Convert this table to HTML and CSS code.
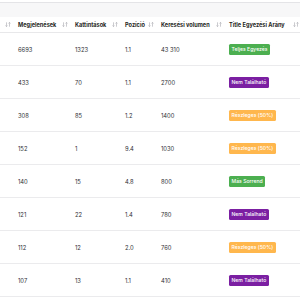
FILE: index.html
```html
<!DOCTYPE html>
<html lang="hu">
<head>
<meta charset="utf-8">
<link rel="stylesheet" href="styles.css">
</head>
<body>
<div class="wrap">
  <div class="toolbar"></div>
  <table class="grid">
    <colgroup>
      <col class="c0"><col class="c1"><col class="c2"><col class="c3"><col class="c4"><col class="c5">
    </colgroup>
    <thead>
      <tr>
        <th><div class="th"><span></span><svg class="sort" viewBox="0 0 6 5"><path d="M1.5 0.3V4.6M0.4 3.5L1.5 4.6L2.6 3.5M4.5 4.7V0.4M3.4 1.5L4.5 0.4L5.6 1.5"/></svg></div></th>
        <th><div class="th"><span>Megjelenések</span><svg class="sort" viewBox="0 0 6 5"><path d="M1.5 0.3V4.6M0.4 3.5L1.5 4.6L2.6 3.5M4.5 4.7V0.4M3.4 1.5L4.5 0.4L5.6 1.5"/></svg></div></th>
        <th><div class="th"><span>Kattintások</span><svg class="sort" viewBox="0 0 6 5"><path d="M1.5 0.3V4.6M0.4 3.5L1.5 4.6L2.6 3.5M4.5 4.7V0.4M3.4 1.5L4.5 0.4L5.6 1.5"/></svg></div></th>
        <th><div class="th"><span>Pozíció</span><svg class="sort" viewBox="0 0 6 5"><path d="M1.5 0.3V4.6M0.4 3.5L1.5 4.6L2.6 3.5M4.5 4.7V0.4M3.4 1.5L4.5 0.4L5.6 1.5"/></svg></div></th>
        <th><div class="th"><span>Keresési volumen</span><svg class="sort" viewBox="0 0 6 5"><path d="M1.5 0.3V4.6M0.4 3.5L1.5 4.6L2.6 3.5M4.5 4.7V0.4M3.4 1.5L4.5 0.4L5.6 1.5"/></svg></div></th>
        <th><div class="th"><span>Title Egyezési Arány</span><svg class="sort" viewBox="0 0 6 5"><path d="M1.5 0.3V4.6M0.4 3.5L1.5 4.6L2.6 3.5M4.5 4.7V0.4M3.4 1.5L4.5 0.4L5.6 1.5"/></svg></div></th>
      </tr>
    </thead>
    <tbody>
      <tr><td></td><td>6693</td><td>1323</td><td>1.1</td><td>43 310</td><td><span class="badge green">Teljes Egyezés</span></td></tr>
      <tr><td></td><td>433</td><td>70</td><td>1.1</td><td>2700</td><td><span class="badge purple">Nem Található</span></td></tr>
      <tr><td></td><td>308</td><td>85</td><td>1.2</td><td>1400</td><td><span class="badge orange">Részleges (50%)</span></td></tr>
      <tr><td></td><td>152</td><td>1</td><td>9.4</td><td>1030</td><td><span class="badge orange">Részleges (50%)</span></td></tr>
      <tr><td></td><td>140</td><td>15</td><td>4.8</td><td>800</td><td><span class="badge green">Más Sorrend</span></td></tr>
      <tr><td></td><td>121</td><td>22</td><td>1.4</td><td>780</td><td><span class="badge purple">Nem Található</span></td></tr>
      <tr><td></td><td>112</td><td>12</td><td>2.0</td><td>760</td><td><span class="badge orange">Részleges (50%)</span></td></tr>
      <tr><td></td><td>107</td><td>13</td><td>1.1</td><td>410</td><td><span class="badge purple">Nem Található</span></td></tr>
    </tbody>
  </table>
</div>
</body>
</html>
```
FILE: styles.css
```css
html, body {
  margin: 0;
  padding: 0;
  background: #ffffff;
  overflow: hidden;
}
body {
  font-family: Inter, "Liberation Sans", sans-serif;
  color: #333;
}
.wrap {
  padding-top: 2px;
  width: 300px;
  overflow: hidden;
}
.toolbar {
  height: 14px;
  border-top: 1px solid #e4e4e7;
  background: #f7f7f8;
}
.grid {
  border-collapse: collapse;
  table-layout: fixed;
  width: 305px;
}
.c0 { width: 14px; }
.c1 { width: 57px; }
.c2 { width: 50px; }
.c3 { width: 36px; }
.c4 { width: 68px; }
.c5 { width: 80px; }
.grid th {
  height: 15px;
  padding: 0;
  border-bottom: 1px solid #e8e8ea;
  font-size: 5.6px;
  font-weight: 700;
  color: #1f1f24;
  text-align: left;
  white-space: nowrap;
}
.th {
  display: flex;
  align-items: center;
  justify-content: space-between;
  padding: 0 3px 0 4px;
}
.grid thead th:last-child .th { padding-right: 6px; }
.sort {
  width: 6px;
  height: 5px;
  fill: none;
  stroke: #a8a8ae;
  stroke-width: 0.6;
  flex: none;
}
.grid td {
  height: 32px;
  padding: 0 0 0 4px;
  border-bottom: 1px solid #ebebed;
  font-size: 5.8px;
  color: #2e2e33;
  white-space: nowrap;
}
.badge {
  display: inline-block;
  height: 11px;
  line-height: 11px;
  padding: 0 2.5px;
  border-radius: 1.5px;
  font-size: 5.1px;
  font-weight: 500;
  color: #ffffff;
}
.green { background: #4caf50; }
.purple { background: #7b1fa2; }
.orange { background: #ffb74d; }
```
